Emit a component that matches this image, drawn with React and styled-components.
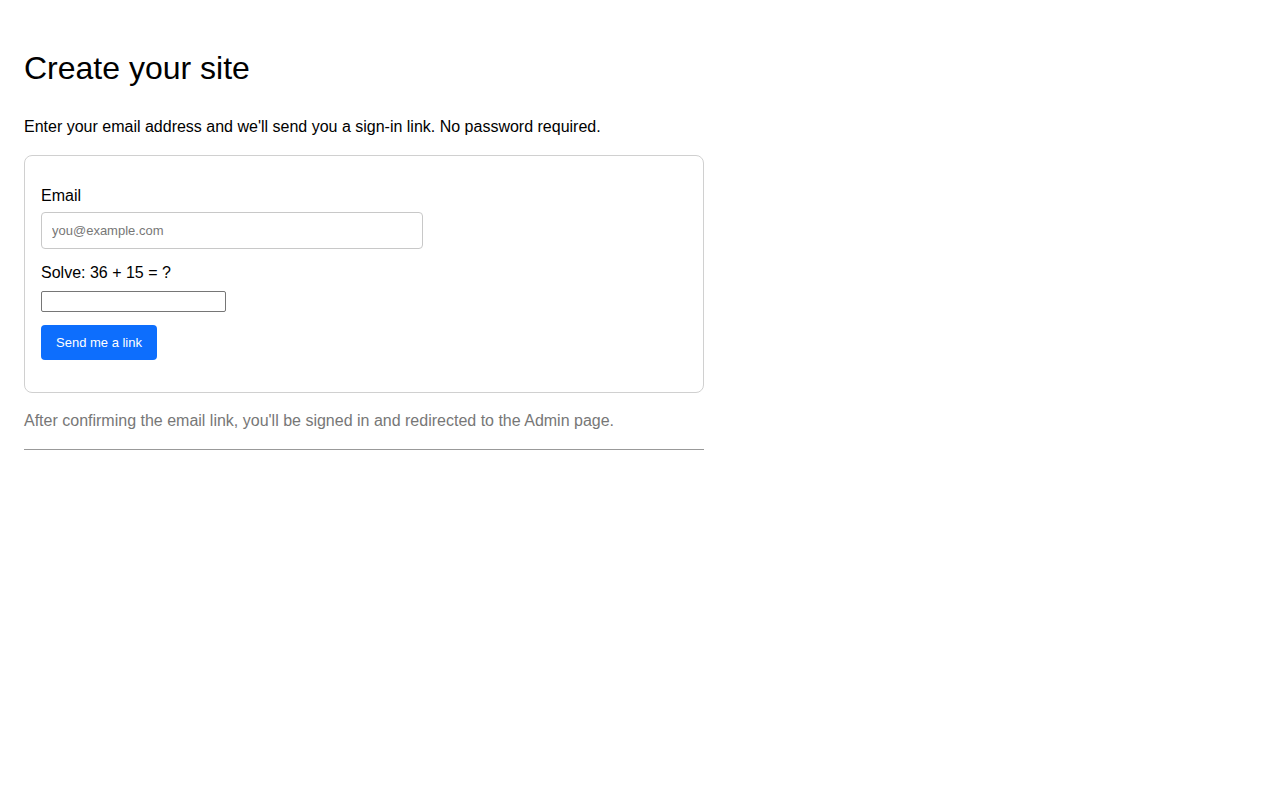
import styled, { createGlobalStyle } from "styled-components";

const Global = createGlobalStyle`
    body {
        margin: 0;
        background: #fff;
        color: #000;
        font-family: "Liberation Sans", Arial, sans-serif;
    }
`;

const Page = styled.main`
    max-width: 680px;
    padding: 0 24px;
`;

const Title = styled.h1`
    font-size: 32px;
    font-weight: 400;
    line-height: 1.2;
    margin: 49px 0 28px;
`;

const Intro = styled.p`
    font-size: 16px;
    line-height: 1.5;
    margin: 0 0 16px;
`;

const Card = styled.form`
    border: 1px solid #d0d0d0;
    border-radius: 8px;
    padding: 30px 16px 32px;
`;

const Label = styled.label`
    display: block;
    font-size: 16px;
    line-height: 20px;
    margin-bottom: ${(p) => p.$gap || 6}px;
`;

const EmailInput = styled.input`
    display: block;
    box-sizing: border-box;
    width: 382px;
    height: 37px;
    padding: 0 10px;
    border: 1px solid #c8c8c8;
    border-radius: 4px;
    font-family: "Liberation Sans", Arial, sans-serif;
    font-size: 13px;
    margin-bottom: 14px;

    &::placeholder {
        color: #777;
    }
`;

const CaptchaInput = styled.input`
    display: block;
    box-sizing: border-box;
    width: 185px;
    height: 21px;
    margin: 0 0 13px;
    border: 1px solid #767676;
    border-radius: 2px;
    padding: 1px 2px;
    font-family: "Liberation Sans", Arial, sans-serif;
`;

const Button = styled.button`
    display: block;
    height: 35px;
    padding: 0 15px;
    border: none;
    border-radius: 4px;
    background: #0d6efd;
    color: #fff;
    font-family: "Liberation Sans", Arial, sans-serif;
    font-size: 13px;
    cursor: pointer;
`;

const Note = styled.p`
    color: #777;
    font-size: 16px;
    line-height: 1.5;
    margin: 16px 0 16px;
`;

const Rule = styled.hr`
    margin: 0;
    border: none;
    border-top: 1px solid #999;
    height: 0;
`;

const App = () => {
    return (
        <Page>
            <Global />
            <Title>Create your site</Title>
            <Intro>Enter your email address and we'll send you a sign-in link. No password required.</Intro>
            <Card onSubmit={(e) => e.preventDefault()}>
                <Label htmlFor="email">Email</Label>
                <EmailInput id="email" type="email" placeholder="you@example.com" />
                <Label htmlFor="captcha" $gap={8}>Solve: 36 + 15 = ?</Label>
                <CaptchaInput id="captcha" type="text" />
                <Button type="submit">Send me a link</Button>
            </Card>
            <Note>After confirming the email link, you'll be signed in and redirected to the Admin page.</Note>
            <Rule />
        </Page>
    );
};

export default App;
